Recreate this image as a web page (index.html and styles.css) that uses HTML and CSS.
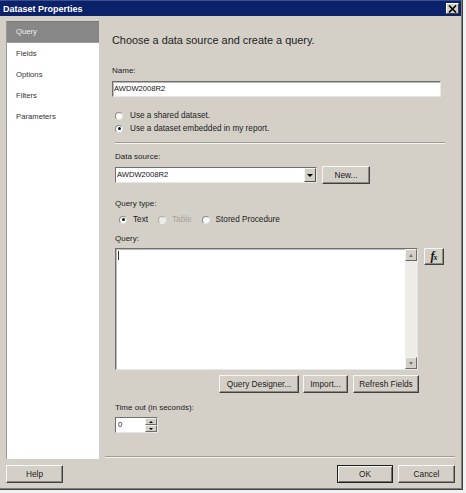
FILE: index.html
```html
<!DOCTYPE html>
<html>
<head>
<meta charset="utf-8">
<title>Dataset Properties</title>
<link rel="stylesheet" href="styles.css">
</head>
<body>
<div class="window">
  <div class="titlebar">
    <span class="title">Dataset Properties</span>
    <span class="close"><svg width="9" height="8" viewBox="0 0 9 8"><path d="M1 0.5 L8 7.5 M8 0.5 L1 7.5" stroke="#000" stroke-width="1.6"/></svg></span>
  </div>
  <div class="main">
    <ul class="nav">
      <li class="nav-item sel">Query</li>
      <li class="nav-item">Fields</li>
      <li class="nav-item">Options</li>
      <li class="nav-item">Filters</li>
      <li class="nav-item">Parameters</li>
    </ul>
    <div class="content">
      <h1 class="heading">Choose a data source and create a query.</h1>
      <div class="label name-label">Name:</div>
      <div class="textbox name-box">AWDW2008R2</div>
      <div class="radio-row first"><span class="radio"></span><span class="rtext">Use a shared dataset.</span></div>
      <div class="radio-row"><span class="radio on"></span><span class="rtext">Use a dataset embedded in my report.</span></div>
      <div class="group">
        <div class="sep"></div>
        <div class="label ds-label">Data source:</div>
        <div class="ds-row">
          <div class="combo">
            <span class="combo-text">AWDW2008R2</span>
            <span class="drop"><span class="tri-down"></span></span>
          </div>
          <button class="btn new-btn">New...</button>
        </div>
        <div class="label qt-label">Query type:</div>
        <div class="qt-row">
          <span class="qt-item"><span class="radio on"></span><span class="rtext">Text</span></span>
          <span class="qt-item disabled"><span class="radio"></span><span class="rtext">Table</span></span>
          <span class="qt-item"><span class="radio"></span><span class="rtext">Stored Procedure</span></span>
        </div>
        <div class="label q-label">Query:</div>
        <div class="query-row">
          <div class="querybox">
            <div class="editor"><span class="caret"></span></div>
            <div class="vscroll">
              <span class="sb-btn"><span class="tri-up small"></span></span>
              <span class="sb-track"></span>
              <span class="sb-btn"><span class="tri-down small"></span></span>
            </div>
          </div>
          <button class="btn fx-btn"><span class="fx">f<span class="fx-x">x</span></span></button>
        </div>
        <div class="btn-row">
          <button class="btn qd-btn">Query Designer...</button>
          <button class="btn imp-btn">Import...</button>
          <button class="btn rf-btn">Refresh Fields</button>
        </div>
        <div class="label to-label">Time out (in seconds):</div>
        <div class="spin">
          <span class="spin-val">0</span>
          <span class="spin-btns">
            <span class="spin-b"><span class="tri-up tiny"></span></span>
            <span class="spin-b"><span class="tri-down tiny"></span></span>
          </span>
        </div>
      </div>
      <div class="sep bottom-sep"></div>
    </div>
  </div>
  <div class="footer">
    <button class="btn help-btn">Help</button>
    <span class="spacer"></span>
    <button class="btn ok-btn">OK</button>
    <button class="btn cancel-btn">Cancel</button>
  </div>
</div>
</body>
</html>
```
FILE: styles.css
```css
html, body {
  margin: 0;
  padding: 0;
  background: #f2f2f2;
}
body {
  font-family: "Liberation Sans", Arial, sans-serif;
  color: #1c1c1c;
}
.window {
  width: 462px;
  height: 489px;
  background: #d4d0c8;
  border-right: 1px solid #404040;
  border-bottom: 1px solid #404040;
  box-shadow: inset -1px -1px 0 #808080;
  display: flex;
  flex-direction: column;
}
.titlebar {
  height: 16px;
  margin-right: 1px;
  background: #0b2169;
  border-top: 1px solid #3a4f8e;
  box-sizing: border-box;
  display: flex;
  align-items: center;
  padding-left: 3px;
  padding-right: 2px;
}
.title {
  flex: 1;
  color: #fff;
  font-weight: bold;
  font-size: 9px;
  line-height: 12px;
}
.close {
  width: 13px;
  height: 11px;
  box-sizing: border-box;
  background: #d4d0c8;
  border: 1px solid;
  border-color: #fff #404040 #404040 #fff;
  display: flex;
  align-items: center;
  justify-content: center;
}
.main {
  display: flex;
  padding-top: 5px;
  height: 438px;
}
.nav {
  list-style: none;
  margin: 0 0 0 6px;
  padding: 0;
  width: 93px;
  height: 438px;
  box-sizing: border-box;
  background: #fff;
  border-top: 1px solid #7a7a7a;
  border-left: 1px solid #9a9a9a;
}
.nav-item {
  height: 21px;
  line-height: 21px;
  padding-left: 9px;
  font-size: 7.7px;
  color: #333;
}
.nav-item.sel {
  background: #878787;
  color: #eee;
  border-bottom: 1px solid #9a9a9a;
  height: 20px;
  line-height: 20px;
}
.content {
  margin-left: 6px;
  width: 350px;
  display: flex;
  flex-direction: column;
  padding-left: 7px;
  box-sizing: border-box;
}
.heading {
  margin: 12px 0 0 0;
  font-weight: normal;
  font-size: 10.9px;
  line-height: 14px;
  color: #222;
}
.label {
  font-size: 8px;
  line-height: 10px;
  color: #222;
}
.name-label { margin-top: 19px; }
.textbox {
  box-sizing: border-box;
  background: #fff;
  border: 1px solid;
  border-color: #6f6f6f #e8e8e8 #e8e8e8 #6f6f6f;
  box-shadow: inset 1px 1px 0 #b8b8b8;
  font-size: 7.6px;
  color: #111;
}
.name-box {
  margin-top: 5px;
  width: 329px;
  height: 16px;
  line-height: 14px;
  padding-left: 1px;
}
.radio-row {
  height: 13px;
  display: flex;
  align-items: center;
  padding-left: 3px;
}
.radio-row.first { margin-top: 12px; }
.radio {
  width: 8px;
  height: 8px;
  box-sizing: border-box;
  border-radius: 50%;
  background: #fff;
  border: 1px solid #8a8a8a;
  border-right-color: #e0e0e0;
  border-bottom-color: #e0e0e0;
  position: relative;
  flex: none;
}
.radio.on::after {
  content: "";
  position: absolute;
  left: 1.5px;
  top: 1.5px;
  width: 3px;
  height: 3px;
  border-radius: 50%;
  background: #111;
}
.rtext {
  font-size: 8.2px;
  line-height: 13px;
  margin-left: 7px;
  color: #1c1c1c;
}
.group {
  padding-left: 3px;
  display: flex;
  flex-direction: column;
}
.sep {
  height: 1px;
  border-top: 1px solid #a09c94;
  border-bottom: 1px solid #f4f3f0;
  box-sizing: content-box;
}
.group .sep {
  margin-top: 7px;
  width: 330px;
  height: 0;
}
.ds-label { margin-top: 8px; }
.ds-row {
  margin-top: 4px;
  height: 18px;
  display: flex;
  align-items: center;
}
.combo {
  width: 202px;
  height: 16px;
  box-sizing: border-box;
  background: #fff;
  border: 1px solid;
  border-color: #6f6f6f #e8e8e8 #e8e8e8 #6f6f6f;
  display: flex;
  align-items: stretch;
}
.combo-text {
  flex: 1;
  font-size: 7.6px;
  line-height: 14px;
  padding-left: 1px;
  color: #111;
}
.drop {
  width: 12px;
  background: #d4d0c8;
  box-sizing: border-box;
  border: 1px solid;
  border-color: #f4f3f0 #505050 #505050 #f4f3f0;
  display: flex;
  align-items: center;
  justify-content: center;
}
.tri-down {
  width: 0;
  height: 0;
  border-left: 3px solid transparent;
  border-right: 3px solid transparent;
  border-top: 3px solid #000;
}
.tri-up {
  width: 0;
  height: 0;
  border-left: 3px solid transparent;
  border-right: 3px solid transparent;
  border-bottom: 3px solid #000;
}
.tri-down.small, .tri-up.small {
  border-left-width: 2.5px;
  border-right-width: 2.5px;
  border-top-color: #777;
  border-bottom-color: #777;
}
.tri-down.tiny { border-left-width: 2px; border-right-width: 2px; border-top-width: 2px; }
.tri-up.tiny { border-left-width: 2px; border-right-width: 2px; border-bottom-width: 2px; }
.btn {
  font-family: "Liberation Sans", Arial, sans-serif;
  font-size: 8.3px;
  color: #1c1c1c;
  background: #d4d0c8;
  box-sizing: border-box;
  height: 18px;
  padding: 0;
  border: 1px solid;
  border-color: #f6f5f2 #404040 #404040 #f6f5f2;
  box-shadow: inset -1px -1px 0 #8c8982;
  line-height: 15px;
  text-align: center;
}
.new-btn {
  margin-left: 5px;
  width: 48px;
}
.qt-label { margin-top: 15px; }
.qt-row {
  margin-top: 4px;
  height: 13px;
  display: flex;
  align-items: center;
  padding-left: 4px;
}
.qt-item {
  display: flex;
  align-items: center;
  margin-right: 10px;
}
.qt-item .rtext { margin-left: 6px; }
.qt-item.disabled .rtext { color: #a6a39c; }
.qt-item.disabled .radio { background: #ecebe8; border-color: #b0aca4 #eeeeee #eeeeee #b0aca4; }
.q-label { margin-top: 8px; }
.query-row {
  margin-top: 4px;
  display: flex;
  align-items: flex-start;
}
.querybox {
  width: 303px;
  height: 122px;
  box-sizing: border-box;
  background: #fff;
  border: 1px solid;
  border-color: #6f6f6f #e8e8e8 #e8e8e8 #6f6f6f;
  box-shadow: inset 1px 1px 0 #b8b8b8;
  display: flex;
}
.editor {
  flex: 1;
  padding: 2px 0 0 2px;
}
.caret {
  display: block;
  width: 1px;
  height: 9px;
  background: #333;
}
.vscroll {
  width: 12px;
  display: flex;
  flex-direction: column;
  background: #edece9;
}
.sb-btn {
  height: 12px;
  box-sizing: border-box;
  background: #d4d0c8;
  border: 1px solid;
  border-color: #f6f5f2 #6a6a6a #6a6a6a #f6f5f2;
  display: flex;
  align-items: center;
  justify-content: center;
}
.sb-track { flex: 1; }
.fx-btn {
  margin-left: 6px;
  width: 20px;
  height: 17px;
}
.fx {
  font-family: "Liberation Serif", "Times New Roman", serif;
  font-style: italic;
  font-weight: bold;
  font-size: 12px;
  line-height: 14px;
  color: #111;
}
.fx-x {
  font-size: 8px;
  margin-left: -1px;
}
.btn-row {
  margin-top: 5px;
  width: 304px;
  display: flex;
  justify-content: flex-end;
}
.qd-btn { width: 80px; }
.imp-btn { width: 45px; margin-left: 4px; }
.rf-btn { width: 66px; margin-left: 5px; }
.to-label { margin-top: 10px; }
.spin {
  margin-top: 4px;
  width: 43px;
  height: 16px;
  box-sizing: border-box;
  background: #fff;
  border: 1px solid;
  border-color: #6f6f6f #e8e8e8 #e8e8e8 #6f6f6f;
  display: flex;
}
.spin-val {
  flex: 1;
  font-size: 7.6px;
  line-height: 14px;
  padding-left: 2px;
  color: #111;
}
.spin-btns {
  width: 12px;
  display: flex;
  flex-direction: column;
}
.spin-b {
  flex: 1;
  box-sizing: border-box;
  background: #d4d0c8;
  border: 1px solid;
  border-color: #f6f5f2 #6a6a6a #6a6a6a #f6f5f2;
  display: flex;
  align-items: center;
  justify-content: center;
}
.bottom-sep {
  margin-top: auto;
  margin-left: -7px;
  margin-bottom: 1px;
  width: 350px;
  height: 0;
}
.footer {
  display: flex;
  padding: 6px 7px 0 6px;
}
.spacer { flex: 1; }
.help-btn { width: 57px; }
.ok-btn {
  width: 56px;
  border-color: #202020;
  box-shadow: inset 1px 1px 0 #f6f5f2, inset -1px -1px 0 #707070;
}
.cancel-btn { width: 57px; margin-left: 5px; }
```
